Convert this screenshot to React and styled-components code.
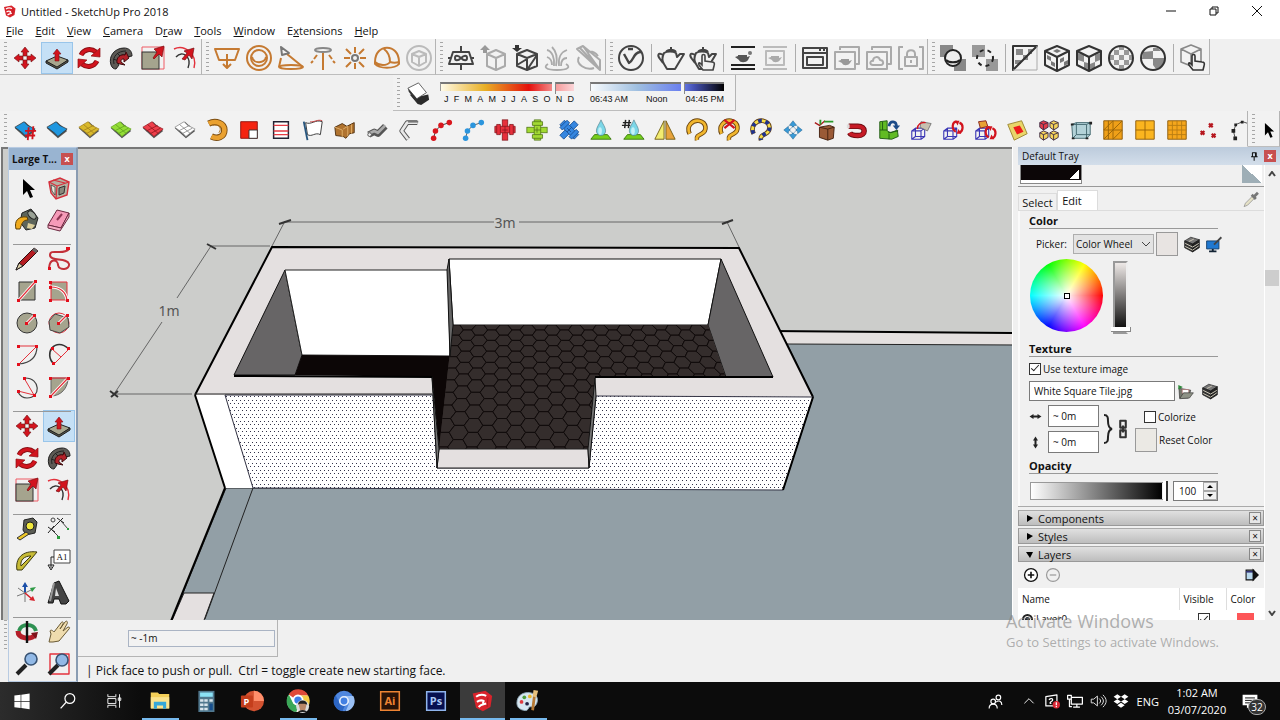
import React from 'react';
import styled, { createGlobalStyle, css } from 'styled-components';

const GlobalStyle = createGlobalStyle`
  *,
  *:before,
  *:after {
    box-sizing: border-box;
  }

  body {
    margin: 0;
    overflow: hidden;
    background: #f0f0f0;
    color: #111;
    font-family: 'Open Sans', 'Noto Sans', sans-serif;
    font-size: 11px;
  }

  button,
  input,
  select {
    margin: 0;
    padding: 0;
    color: inherit;
    font: inherit;
  }
`;

/* ---------- icons, drawn on a 26 x 26 grid ---------- */

const RED = '#d2141e';
const ORANGE = '#c57a32';
const DARK = '#444';
const PALE = '#aaa';

const line = (stroke, width = 2) => ({
  fill: 'none',
  stroke,
  strokeWidth: width,
  strokeLinejoin: 'round',
});

const teapot = 'M6 8c-2 4-2 8 0 11l3 5h8l3-5 6-10h-4l-3 3-1-4c-3-2-9-2-12 0zM5 10c-5-3-6 0-3 4l3 4M8 7c2-3 8-3 10 0M13 4V2';
const hand = 'M13 25l-4-5c-1-2 0-3 2-1l1 1v-9c0-2 3-2 3 0v5l7 1c2 0 3 1 2 4l-1 4z';
const cubePath = 'M13 1l12 5v14l-12 6-12-6V6zM1 6l12 6 12-6M13 12v14';

const moveIcon = (
  <g fill={RED} stroke="#6d1013" strokeWidth="0.6">
    {[0, 90, 180, 270].map((a) => (
      <path key={a} transform={`rotate(${a} 13 13)`} d="M13 2l4 5h-2v4h-4V7H9z" />
    ))}
  </g>
);

const pushIcon = (
  <>
    <path d="M2 16l11-5 11 4-11 8z" fill="#a8a78f" stroke="#222" />
    <path d="M2 16v2l11 6 11-7v-2l-11 7z" fill="#555548" stroke="#222" />
    <path d="M13 4l4 5h-2v7h-4V9H9z" fill={RED} stroke="#7a1014" strokeWidth="0.6" />
  </>
);

const rotateIcon = (
  <>
    <path d="M5 10c3-6 10-7 15-3M21 16c-3 6-10 7-15 3" {...line('#8d1015', 5)} />
    <path d="M5 10c3-6 10-7 15-3M21 16c-3 6-10 7-15 3" {...line(RED, 3)} />
    <path d="M15 11l9 1V3zM11 15l-9-1v9z" fill={RED} stroke="#8d1015" strokeWidth="0.7" />
  </>
);

const followIcon = (
  <>
    <path d="M3 20C0 11 7 3 16 3c5 0 8 3 8 8l-5 1c0-3-5-3-8 0-2 2-2 5 0 8l-3 4c-2 0-4-1-5-4z" fill="#5d5a55" stroke="#222" />
    <path d="M6 19C4 11 10 6 18 6M5 14l6 2M9 8l4 4" {...line('#222', 1)} />
    <path d="M9 18c-1-6 4-9 8-8l1-3 3 6-5 4v-3c-3 0-3 1-3 3l4 3-5-1z" fill="#b32229" stroke="#3c0a0c" />
  </>
);

const scaleIcon = (
  <>
    <rect x="2" y="2" width="22" height="22" {...line('#ef5a64', 1)} />
    <rect x="2" y="7" width="17" height="17" fill="#a5a48e" stroke="#333" />
    <path d="M13 13l4-6-3-3 10-3-2 11-3-3-5 5z" fill={RED} stroke="#7a1014" strokeWidth="0.7" />
  </>
);

const offsetIcon = (
  <>
    <path d="M2 4C12-1 26 9 22 23" {...line('#e3323c', 1.4)} />
    <path d="M4 12c7-8 16 1 12 11" {...line('#333', 1.4)} />
    <path d="M10 14l5-6-3-2 10-3-2 11-3-4-4 5z" fill={RED} stroke="#7a1014" strokeWidth="0.7" />
  </>
);

const slab = (fill, grid) => (
  <>
    <path d="M2 11l11-7 11 10-10 8z" fill="#555" />
    <path d="M2 10l10-6 4 4 8 4-10 8-4-4z" fill={fill} stroke={grid || '#333'} strokeWidth="0.8" />
    <path d="M7 7l12 10M6 14l12-6M10 17l11-6" fill="none" stroke={grid || 'none'} strokeWidth="0.9" />
  </>
);

const beads = (color, edge) => (
  <>
    <path d="M5 22l2-8 6-6 9-3" {...line(edge, 1)} />
    {[[5, 22], [7, 14], [13, 8], [22, 5]].map(([x, y]) => (
      <circle key={x} cx={x} cy={y} r="3" fill={color} />
    ))}
  </>
);

const cross = (fill, edge, a = 0) => (
  <g transform={`rotate(${a} 13 13)`} fill={fill} stroke={edge} strokeWidth="0.8">
    <rect x="10" y="2" width="6" height="22" />
    <path d="M2 9h22v7H2z" />
    <path d="M7 7v11M19 7v11M10 13h6M13 9v7" />
    <path d="M4 7h4v11H4zM18 7h4v11h-4z" />
  </g>
);

const drop = (
  <>
    <path d="M2 23l4-5h14l4 5z" fill="#76cf1c" stroke="#3c7a10" />
    <path d="M13 2c2 5 5 8 5 12a5 5 0 0 1-10 0c0-4 3-7 5-12z" fill="#7cd7e8" stroke="#55808a" strokeWidth="0.7" />
    <ellipse cx="12" cy="14" rx="2" ry="4" fill="#c4f1f7" />
  </>
);

const loopPath = 'M5 17C1 9 8 2 15 3c9 2 9 11 3 14-4 2-6 3-5 7';

const loop = (color) => (
  <>
    <path d={loopPath} {...line('#6b4510', 5)} />
    <path d={loopPath} {...line(color, 3)} />
  </>
);

const wireCube = (
  <path d="M3 14h10v9H3zM7 11h10v9H7zM3 14l4-3M13 14l4-3M13 23l4-3M3 23l4-3" {...line('#3b37b5', 1.2)} />
);

const smallSwirl = (x, y) => (
  <g transform={`translate(${x} ${y})`}>
    <path d="M6 1c-5 0-6 8-1 11M9 2c5 2 4 9 0 11" {...line(RED, 2.4)} />
    <path d="M4 0l5 0-2 5zM11 14l-5 0 2-5z" fill={RED} />
  </g>
);

const checks = 'M6 5h5v5H6zM11 10h5v5h-5zM16 5h5v5h-5zM1 10h5v5H1zM21 10h4v5h-4zM6 15h5v5H6zM16 15h5v5h-5zM11 20h5v4h-5zM11 2h5v3h-5z';

const woodBox = (
  <>
    <path d="M1 8l10-6 14 4-11 7z" fill="#777" stroke="#111" />
    <path d="M1 8v11l13 7V13z" fill="#333" stroke="#111" />
    <path d="M14 13v13l11-7V6z" fill="#222" stroke="#111" />
    <path d="M2 12l12 6 10-6M2 17l12 6 10-7M8 9l8-4" {...line('#c9c4b4', 1.6)} />
  </>
);

const icons = {
  move: moveIcon,
  push: pushIcon,
  rotate: rotateIcon,
  follow: followIcon,
  scale: scaleIcon,
  offset: offsetIcon,
  rectLight: <path d="M1 4h24l-4 11H5zM13 9v14M9 19l4 4 4-4" {...line(ORANGE)} />,
  sphereLight: (
    <g {...line(ORANGE)}>
      <circle cx="13" cy="13" r="12" />
      <circle cx="13" cy="13" r="8" />
      <path d="M6 12c1 7 13 7 14 0" />
    </g>
  ),
  spotLight: (
    <>
      <path d="M3 13L1 22M9 9l16 13" {...line(ORANGE)} />
      <ellipse cx="13" cy="22" rx="12" ry="2" {...line(ORANGE)} />
      <path d="M3 2l8 6-7 2z" {...line('#777')} />
    </>
  ),
  iesLight: (
    <>
      <ellipse cx="13" cy="5" rx="8" ry="2" {...line('#888')} />
      <path d="M13 8v17M7 10l-3 4M19 10l3 4M3 16l-2 2M23 16l2 2" {...line(ORANGE)} />
    </>
  ),
  omniLight: (
    <>
      <path d="M13 2v6M13 18v6M2 13h6M18 13h6M4 4l5 5M17 17l5 5M22 4l-5 5M9 17l-5 5" {...line(ORANGE)} />
      <circle cx="13" cy="13" r="3" {...line('#777')} />
    </>
  ),
  domeLight: (
    <path d="M1 17C1-2 25-2 25 17v2c-4 5-20 5-24 0zM1 17c4 4 12 4 15 0 0-7-2-10-6-13M16 17c3 1 6 1 9 0" {...line(ORANGE)} />
  ),
  meshLight: (
    <>
      <circle cx="13" cy="13" r="12" {...line('#bbb')} />
      <path d="M13 6l7 3v8l-7 4-7-4V9zM6 9l7 3 7-3M13 12v9" {...line('#bbb')} />
    </>
  ),
  infinite: (
    <g {...line(DARK)}>
      <path d="M5 7h16l4 12H1zM13 1v6M13 19v6M0 13h3M23 13h3" />
      <path d="M13 13c-3-3-6-3-6 0s3 3 6 0 6-3 6 0-3 3-6 0" />
    </g>
  ),
  exportProxy: (
    <>
      <path d="M16 5l9 4v12l-9 4-9-4V9zM7 9l9 4 9-4M16 13v12" {...line(PALE)} />
      <path d="M5 0l5 5H7v3H3V5H0z" fill="#999" />
    </>
  ),
  importProxy: (
    <>
      <path d="M15 5l10 4v12l-10 4-10-4V9zM5 9l10 4 10-4M15 13v12M15 25l10-15M5 20l10-6" {...line(DARK)} />
      <path d="M5 7l5-4H7V0H3v3H0z" fill="#333" />
    </>
  ),
  fur: (
    <g {...line(PALE, 1.8)}>
      <path d="M4 19c-5 3-2 6 9 6s14-3 9-6M10 21C11 13 8 6 3 5M12 21c2-9 0-15-4-19M15 21c-1-8 2-14 8-16M17 21c0-5 2-8 6-8M8 20c0-4-2-7-5-8" />
    </g>
  ),
  clipper: (
    <path d="M1 4l6-3 17 14v10zM7 1l17 24M4 3l18 19M3 12c-4 7 7 14 15 11M11 7c4-1 8 0 11 4" {...line(PALE)} />
  ),
  vray: (
    <>
      <circle cx="13" cy="13" r="12" {...line(DARK)} />
      <path d="M6 9l5 9c5-2 4-11 12-11M10 4h5" {...line(DARK, 2.4)} />
    </>
  ),
  teapot: <path d={teapot} {...line(DARK)} />,
  teapotHand: (
    <>
      <path d={teapot} {...line(DARK)} />
      <path d={hand} fill="#f0f0f0" stroke={DARK} strokeWidth="1.6" />
    </>
  ),
  cloudPot: (
    <>
      <path d="M1 2h24M1 24h24M1 20h24" {...line('#222')} />
      <path d="M8 10h9v2l3-1-2 4c-2 3-8 3-9 0l-4-3 3-1z" fill="#555" />
      <circle cx="20" cy="8" r="2" fill="#777" />
    </>
  ),
  framePot: (
    <>
      <path d="M1 2h24M1 24h24M4 6h18v14H4z" {...line('#bbb')} />
      <path d="M9 11h8v2l3-1-2 3c-2 3-7 3-8 0l-4-2 3-1z" fill="#aaa" />
    </>
  ),
  buffer: <path d="M1 3h24v20H1zM1 8h24M5 12h16v8H5zM17 5h2M21 5h2" {...line(DARK)} />,
  framesPot: (
    <>
      <path d="M1 7h20v17H1zM6 5V2h19v17h-3" {...line(PALE)} />
      <path d="M7 14h8v2l3-1-2 3c-2 3-7 3-8 0l-4-2 3-1z" fill="#999" />
    </>
  ),
  framesCloud: <path d="M1 7h20v17H1zM6 5V2h19v17h-3M7 20c-4 0-3-5 0-4 0-5 6-5 7-1 4 0 4 5 1 5z" {...line(PALE)} />,
  lock: <path d="M5 2H1v22h4M21 2h4v22h-4M7 12h12v9H7zM9 12V9c0-5 8-5 8 0v3M13 15v3" {...line(PALE)} />,
  squares: (
    <>
      <path d="M0 0h13v12H0zM14 14h12v12H14z" fill="#888" />
      <circle cx="13" cy="13" r="8" fill="#eee" stroke="#222" strokeWidth="2" />
      <path d="M6 15c3 3 11 3 14 0" {...line('#222')} />
    </>
  ),
  squaresDash: (
    <>
      <path d="M0 0h13v12H0zM14 14h12v12H14z" fill="#999" />
      <circle cx="13" cy="13" r="8" strokeDasharray="4 4" {...line('#222')} />
    </>
  ),
  diagonal: (
    <>
      <path d="M4 4h7v6H4zM11 10h5v5h-5zM16 4h4v5h-4zM3 15h6v4H3z" fill="#888" />
      <path d="M1 1h24L1 25z" {...line('#333')} />
      <path d="M25 1v24H1" {...line('#aaa', 1)} />
    </>
  ),
  cubeChecks: (
    <>
      <path d="M3 10l4 2v4l-4-2zM7 16l4 2v4l-4-2zM16 14l4-2v4l-4 2zM20 17l4-2v4l-4 2zM9 6l4-2 4 2-4 2z" fill="#777" />
      <path d={cubePath} {...line('#333')} />
    </>
  ),
  cubeChecksBig: (
    <>
      <path d="M2 8l6 2v7l-6-2zM19 10l5-2v7l-5 2zM14 19l5-2v6l-5 1zM8 17l4 1v6l-4-1z" fill="#888" />
      <path d={cubePath} {...line('#333')} />
    </>
  ),
  ballChecks: (
    <>
      <path d={checks} fill="#999" />
      <circle cx="13" cy="13" r="12" {...line('#333')} />
    </>
  ),
  ballChecksBig: (
    <>
      <path d="M13 13h12c-1 6-4 9-9 11l-3-4zM3 7l10-1v8H2zM13 3l5 0 3 3-8 0z" fill="#888" />
      <circle cx="13" cy="13" r="12" {...line('#333')} />
    </>
  ),
  cubeHand: (
    <>
      <path d="M11 0l10 4v13l-10 4-10-4V4zM1 4l10 5 10-5M11 9v10" {...line('#888', 1.6)} />
      <path d={hand} fill="#f0f0f0" stroke="#333" strokeWidth="1.6" />
    </>
  ),
  shadow: (
    <>
      <path d="M3 14l9 11 4 1 9-6-1-6-9 2z" fill="#2b2b2b" />
      <path d="M1 7l12-6 9 11-11 7z" fill="#fff" stroke="#555" />
      <path d="M1 7l10 12v4L2 11z" fill="#333" />
    </>
  ),
  slabHash: (
    <>
      {slab('#1f97e0')}
      <path d="M17 10l-1 14M22 9l-1 14M13 14h12M13 19h11" {...line(RED)} />
    </>
  ),
  slabBlue: slab('#1f97e0'),
  slabGold: slab('#d9b92d', '#a4831c'),
  slabGreen: slab('#94dd37', '#62a51d'),
  slabRed: slab('#ee3f4b', '#961820'),
  slabWhite: slab('#fff', '#888'),
  ring: (
    <>
      <path d="M4 6C12 2 21 6 21 13c0 8-8 10-14 7" {...line('#7c4d11', 7)} />
      <path d="M4 6C12 2 21 6 21 13c0 8-8 10-14 7" {...line('#eaa130', 5)} />
      <path d="M8 8c7-2 11 3 7 8" {...line('#a86c18', 1)} />
    </>
  ),
  redCorner: (
    <>
      <path d="M4 4h18v18H4z" fill="#f42310" stroke="#8d1510" />
      <path d="M13 13h9v9h-9z" fill="#fff" stroke="#333" />
    </>
  ),
  bars: (
    <>
      <path d="M5 4h16v18H5z" fill="#fff" stroke="#223" strokeWidth="1.6" />
      <path d="M5 8h16M5 14h16M5 18h16" {...line('#e53b44', 1.6)} />
    </>
  ),
  flag: (
    <>
      <path d="M5 5c6 3 11-4 18-1l-2 14c-6-3-9 3-14 0z" fill="#fff" stroke="#333" />
      <path d="M3 4l4 20" {...line('#26557e')} />
      <path d="M10 4c4 1 8-3 13-1" {...line('#c33a3a', 1)} />
    </>
  ),
  woodJoint: (
    <>
      <path d="M2 10l8-4 5 3 8-4v11l-5 1-4 5-3-2-8-1z" fill="#b0732f" stroke="#4e3010" />
      <path d="M11 12l5-3v11M2 10l8 3v8M20 7v10" {...line('#e1b06a', 1)} />
    </>
  ),
  pipe: (
    <>
      <path d="M4 18l6-3 4 2 8-8" {...line('#555', 7)} />
      <path d="M4 17l6-3 4 2 8-8" {...line('#aaa', 3)} />
      <circle cx="5" cy="18" r="2" fill="#eee" stroke="#555" />
    </>
  ),
  bend: (
    <>
      <path d="M22 5H11L5 14l7 9" {...line('#555', 5)} />
      <path d="M22 5H11L5 14l7 9" {...line('#e8e8e8', 3)} />
      <path d="M23 4H12" {...line('#777')} />
    </>
  ),
  beadsRed: beads('#d9161d', '#333'),
  beadsBlue: beads('#2b95dd', '#555'),
  crossRed: cross('#e6303b', '#83151b'),
  crossGreen: cross('#a2da32', '#4c7013', 90),
  crossBlue: cross('#3586e0', '#164a8c', 45),
  drop,
  dropHash: (
    <>
      <g transform="translate(1 0)">{drop}</g>
      <path d="M5 2L4 11M9 2L8 11M2 5h9M1 8h9" {...line('#222', 1.6)} />
    </>
  ),
  mirror: (
    <>
      <path d="M12 3v20H2z" fill="#f2ec70" stroke="#715d13" />
      <path d="M14 3v20h10z" fill="#e8a33c" stroke="#715d13" />
    </>
  ),
  loop: loop('#f1b62d'),
  loopCut: (
    <>
      {loop('#f1b62d')}
      <path d="M8 2l11 9M19 2L8 11" {...line(RED, 2.4)} />
    </>
  ),
  loopDots: (
    <>
      {loop('#f5dd49')}
      <path d={loopPath} strokeDasharray="4 4" {...line('#1f328f', 4)} />
    </>
  ),
  moveBlue: (
    <g fill="#399ad7" stroke="#1c5985" strokeWidth="0.5">
      {[0, 90, 180, 270].map((a) => (
        <path key={a} transform={`rotate(${a} 13 13)`} d="M13 3l4 5h-2l-2 2-2-2H9z" />
      ))}
      <path d="M13 9l4 4-4 4-4-4z" fill="none" />
    </g>
  ),
  woodCube: (
    <>
      <path d="M7 10l11-2 5 2-1 12-6 2-9-3z" fill="#9a5a36" stroke="#43210f" />
      <path d="M7 10l9 2v12M16 12l7-2" {...line('#43210f', 1)} />
      <path d="M2 5l5 3 6-5" {...line('#a81b1b', 1.4)} />
      <path d="M8 7V2M12 4h10" {...line('#2b9a2c')} />
    </>
  ),
  magnet: (
    <>
      <path d="M4 9h10c9 0 9 10 0 10-4 0-8-1-9-3" {...line('#6e0d12', 6)} />
      <path d="M4 9h10c9 0 9 10 0 10-4 0-8-1-9-3" {...line('#c61b26', 4)} />
      <path d="M2 9h3" {...line('#ddd', 4)} />
    </>
  ),
  greenCubes: (
    <>
      <path d="M3 4l8-1v11l4 2 7-3 1 7-7 3-13-1z" fill="#61bb23" stroke="#1e5a12" />
      <path d="M3 13h8M12 16l11-2M6 4v9M13 17v6" {...line('#1e5a12', 1)} />
      <path d="M13 9c1-7 8-6 8 0" {...line('#1c4b88', 3)} />
      <path d="M17 8h8l-4 5z" fill="#1c4b88" />
    </>
  ),
  wireBend: (
    <>
      {wireCube}
      <path d="M13 4l11 2-4 8-8-4z" fill="#c7c0b0" stroke="#777" />
      <path d="M9 12c0-5 4-8 9-7" {...line(RED, 1.6)} />
    </>
  ),
  wireSwirl: (
    <>
      {wireCube}
      {smallSwirl(11, 3)}
    </>
  ),
  wireSwirlTwo: (
    <>
      {wireCube}
      <path d="M6 4l8-1 2 6-8 2z" fill="#e8a133" stroke="#86211b" />
      {smallSwirl(12, 9)}
    </>
  ),
  swatch: (
    <>
      <path d="M3 7l15-4 6 14-14 7z" fill="#e9d66a" stroke="#9a8631" />
      <path d="M9 10l7-2 4 7-7 3z" fill="#ee1c1c" />
    </>
  ),
  fourCubes: (
    <>
      {[[3, 3, '#e13b4a'], [14, 3, '#f3d25a'], [3, 14, '#f3d25a'], [14, 14, '#f3d25a']].map(([x, y, c]) => (
        <g key={`${x}-${y}`} transform={`translate(${x} ${y})`}>
          <path d="M0 2l4-2 5 2v5L4 10 0 7z" fill={c} stroke="#3f2d48" />
          <path d="M0 2l4 2 5-2M4 4v6" {...line('#3f2d48', 1)} />
        </g>
      ))}
    </>
  ),
  glassCube: (
    <>
      <path d="M3 7l5-2h15v13l-4 4H4z" fill="#b3d2d8" stroke="#41666e" />
      <path d="M3 7h16v15M19 7l4-2M8 5v13h15M8 18l-4 4" {...line('#41666e', 1)} />
      <path d="M2 6h3v2H2zM22 4h3v3h-3zM18 21h3v2h-3zM3 21h3v2H3z" fill="#222" />
    </>
  ),
  gridDiag: (
    <>
      <path d="M3 3h20v20H3z" fill="#f0a018" stroke="#8b5a0a" />
      <path d="M3 13h20M13 3v20M3 23L23 3M3 13L13 3M13 23l10-10M8 3v20" {...line('#9a6509', 1)} />
    </>
  ),
  gridFour: (
    <>
      <path d="M3 3h20v20H3z" fill="#fbb51f" stroke="#8b5a0a" />
      <path d="M3 13h20M13 3v20" {...line('#9a6509', 1)} />
    </>
  ),
  gridNine: (
    <>
      <path d="M3 3h20v20H3z" fill="#f5a61c" stroke="#8b5a0a" />
      <path d="M3 8h20M3 13h20M3 18h20M8 3v20M13 3v20M18 3v20" {...line('#b97d12', 1)} />
    </>
  ),
  redMarks: <path d="M13 6l4 4M17 6l-4 4M4 14l4 4M8 14l-4 4M16 17l4 4M20 17l-4 4" {...line('#b6171f', 2.4)} />,
  pointsArc: (
    <>
      <path d="M10 22L8 14l3-7 7-3 6 2" {...line('#444', 1)} />
      <path d="M8 20h4v4H8zM6 12h4v4H6zM9 6h3v3H9zM16 3h3v3h-3z" fill="#222" />
    </>
  ),
  cursor: <path d="M9 4v16l4-4 3 7 3-1-3-7h5z" fill="#000" />,
  component: (
    <>
      <path d="M3 7l11-4 9 4-2 13-11 4-5-6z" fill="#b5b2a3" stroke="#d5303c" strokeWidth="1.4" />
      <path d="M3 7l8 4-1 13M11 11l12-4M7 5l12 3" {...line('#d5303c', 1.2)} />
      <path d="M13 13l6-2-1 7-5 2z" fill="#8a887c" stroke="#333" />
      <path d="M5 10l4 2v8l-3-4z" fill="#e9e6da" stroke="#333" strokeWidth="0.7" />
    </>
  ),
  bucket: (
    <>
      <path d="M8 6l9-4 7 9-3 10-9 2-6-8z" fill="#5d655b" stroke="#222" />
      <ellipse cx="18" cy="8" rx="5" ry="3" transform="rotate(45 18 8)" fill="#9aa296" stroke="#222" />
      <path d="M2 22C0 14 4 9 13 10l1 3c-6 0-6 4-8 9z" fill="#f0ab1d" stroke="#5d4008" />
      <path d="M14 16l7 2-3 4-5-1z" fill="#dccf9b" />
    </>
  ),
  eraser: (
    <>
      <path d="M2 18L11 3l12 3-8 15z" fill="#f59ab8" stroke="#6c2a41" />
      <path d="M2 18l13 3 8-15v4l-9 14-12-3z" fill="#f7b0c8" stroke="#6c2a41" />
      <path d="M11 13l5-6" {...line('#8e3553')} />
    </>
  ),
  pencil: (
    <>
      <path d="M2 24l3-7L20 2l4 3L9 20z" fill="#b51c22" stroke="#2e0c0d" />
      <path d="M2 24l3-7 4 3z" fill="#dccfa7" stroke="#222" />
      <path d="M19 3l4 3" {...line('#666', 3)} />
    </>
  ),
  freehand: (
    <>
      <path d="M3 22C4 11 12 14 12 19c1 6 12 5 11-1C21 11 4 16 4 9S17 10 23 3" {...line('#c3313a', 2)} />
      <path d="M2 21h3v3H2zM20 1h4v3h-4z" fill="#e30f1c" />
    </>
  ),
  rectangle: (
    <>
      <path d="M5 4h16v18H5z" fill="#a5a48e" stroke="#333" />
      <path d="M5 22L21 4" {...line('#fff', 3)} />
      <path d="M5 22L21 4" {...line('#e3323c', 1.2)} />
      <path d="M3 21h3v3H3zM20 2h3v3h-3z" fill="#e30f1c" />
    </>
  ),
  rotRect: (
    <>
      <path d="M5 4h16v18H5z" fill="#a5a48e" stroke="#e3323c" />
      <path d="M5 9c9 0 15 5 16 13" {...line('#fff', 3)} />
      <path d="M5 9c9 0 15 5 16 13" {...line('#e3323c', 1.2)} />
      <path d="M3 3h3v3H3zM3 8h3v3H3zM3 21h3v3H3zM20 21h3v3h-3z" fill="#e30f1c" />
    </>
  ),
  circle: (
    <>
      <circle cx="13" cy="13" r="10" fill="#a5a48e" stroke="#333" />
      <path d="M13 13l7-7" {...line('#fff', 3)} />
      <path d="M13 13l7-7" {...line('#e3323c', 1.2)} />
      <path d="M11 12h3v3h-3zM19 4h3v3h-3z" fill="#e30f1c" />
    </>
  ),
  polygon: (
    <>
      <circle cx="13" cy="13" r="10" {...line('#e3323c', 1)} />
      <path d="M9 4l13 4 1 9-9 6-10-3-1-9z" fill="#a5a48e" stroke="#444" />
      <path d="M13 13l7-7" {...line('#fff', 3)} />
      <path d="M13 13l7-7" {...line('#e3323c', 1.2)} />
      <path d="M11 12h3v3h-3zM20 4h3v3h-3z" fill="#e30f1c" />
    </>
  ),
  arc: (
    <>
      <path d="M23 4c0 11-7 17-18 18" {...line('#444', 1.2)} />
      <path d="M4 4h19L5 22" {...line('#e3323c', 1)} />
      <path d="M3 3h3v3H3zM21 3h3v3h-3zM3 21h3v3H3z" fill="#e30f1c" />
    </>
  ),
  twoArc: (
    <>
      <path d="M8 22C-3 12 9-6 23 7" {...line('#333', 1.6)} />
      <path d="M8 22L23 7M6 7l9 8" {...line('#e3323c', 1)} />
      <path d="M6 20h3v3H6zM21 5h3v3h-3zM5 5h3v3H5z" fill="#e30f1c" />
    </>
  ),
  threeArc: (
    <>
      <path d="M11 4c16 0 16 20 2 20-4 0-7-2-9-6" {...line('#444', 1.2)} />
      <path d="M10 4l10 17-16-4" {...line('#e3323c', 1)} />
      <path d="M9 3h3v3H9zM3 16h3v3H3zM19 20h3v3h-3z" fill="#e30f1c" />
    </>
  ),
  pie: (
    <>
      <path d="M5 4h17c0 10-7 18-17 18z" fill="#a5a48e" stroke="#666" />
      <path d="M5 22L22 4" {...line('#fff', 3)} />
      <path d="M5 4h17L5 22" {...line('#e3323c', 1.2)} />
      <path d="M3 3h3v3H3zM21 3h3v3h-3zM3 21h3v3H3z" fill="#e30f1c" />
    </>
  ),
  tape: (
    <>
      <path d="M10 4l9-2 4 4-2 11-9 2-3-5z" fill="#5b5d55" stroke="#222" />
      <circle cx="16" cy="10" r="4" fill="#f2e93c" stroke="#222" />
      <path d="M3 22l9-6 3 2-9 6z" fill="#f0c929" stroke="#333" />
    </>
  ),
  dimension: (
    <>
      <path d="M5 14L14 5M6 14l6 6M15 5l7 8" {...line('#444', 1)} />
      <path d="M2 11l7 5M8 10l-6 7M11 2l7 5M17 2l-6 6" {...line('#222', 1)} />
      <path d="M11 20h3v3h-3zM21 12h2v2h-2z" fill="#2b9d3d" />
      <circle cx="7" cy="4" r="2" {...line('#444', 1)} />
    </>
  ),
  protractor: (
    <>
      <path d="M3 22C1 11 8 2 23 4L8 22z" fill="#c7bb36" stroke="#3d3a10" />
      <path d="M7 18c-1-6 3-10 10-10z" fill="#f0f0f0" stroke="#3d3a10" />
    </>
  ),
  textTag: (
    <>
      <path d="M8 2h16v13H8z" fill="#fff" stroke="#444" />
      <path d="M8 9H5v11M2 17l3 5 3-5z" {...line('#222', 1)} />
      <text x="16" y="12" fontSize="9" fontFamily="Liberation Serif, serif" textAnchor="middle" fill="#111">A1</text>
    </>
  ),
  axes: (
    <>
      <path d="M11 13V5" {...line('#1b4fa8', 2)} />
      <path d="M11 2l3 5H8z" fill="#1b4fa8" />
      <path d="M11 13l8-4M11 13l-8 3M11 13v9M11 13L4 8" {...line('#777', 1)} />
      <path d="M16 8l6-1-4 5z" fill="#2e9a45" />
      <path d="M11 13l7 6" {...line('#d6222b', 1.6)} />
      <path d="M21 21l-6-1 4-4z" fill="#d6222b" />
    </>
  ),
  threeText: (
    <>
      <path d="M8 3l5-2 10 20-3 3h-5l-2-5H8l-1 4H2z" fill="#444" stroke="#111" />
      <path d="M10 8l3 8H9z" fill="#ddd" />
      <path d="M8 3l-4 18" {...line('#999', 2)} />
    </>
  ),
  orbit: (
    <>
      <path d="M5 12c2-8 15-8 17 0" {...line('#2e9152', 4)} />
      <path d="M4 12c0 8 13 9 17 4" {...line('#b41f2a', 5)} />
      <path d="M17 14l7-1-2 7z" fill="#7c141b" />
      <path d="M13 2v22" {...line('#111', 2.4)} />
    </>
  ),
  pan: (
    <path
      d="M3 23l2-8-1-3c1-2 3 0 4 1l7-9c1-2 3-1 2 1l-3 5 5-7c2-2 3 0 2 2l-4 7 5-4c2 0 2 1 1 2l-5 6-5 6-6 1z"
      fill="#efdcae"
      stroke="#6a5a34"
    />
  ),
  zoom: (
    <>
      <path d="M3 23l9-9" {...line('#222', 4)} />
      <circle cx="17" cy="8" r="6" fill="#92b9e6" stroke="#385374" strokeWidth="1.6" />
    </>
  ),
  zoomAll: (
    <>
      <path d="M4 3h19v20H4z" {...line('#e3323c', 1.4)} />
      <path d="M3 23l9-9" {...line('#222', 4)} />
      <circle cx="16" cy="9" r="6" fill="#92b9e6" stroke="#385374" strokeWidth="1.6" />
    </>
  ),
  woodBox,
  monitor: (
    <>
      <path d="M1 8h20v13H1z" fill="#1f78d0" stroke="#103a66" strokeWidth="1.4" />
      <path d="M11 21v3M5 25h12" {...line('#123', 3)} />
      <path d="M13 14L25 2" {...line('#444', 3)} />
    </>
  ),
  folder: (
    <>
      <path d="M3 8l18 3-4 12H4z" fill="#74786d" stroke="#333" />
      <path d="M8 10h10v6H8z" fill="#fff" stroke="#a66" />
      <path d="M4 24l6-9h15l-6 8z" fill="#8e9286" stroke="#333" />
      <path d="M2 10V3l7 3z" fill="#2e8a3a" />
    </>
  ),
  dropper: (
    <>
      <path d="M3 24l2-5L15 9l3 3L8 22z" fill="#e5e1c6" stroke="#888" />
      <path d="M14 7l6 6M18 9l5-5" {...line('#777', 4)} />
    </>
  ),
  details: (
    <>
      <path d="M2 4h14v18H2z" fill="#b9d9ee" stroke="#111" strokeWidth="2" />
      <path d="M2 7h13" {...line('#337', 3)} />
      <path d="M14 1l12 12-12 12z" fill="#111" />
    </>
  ),
  chain: <path d="M9 1h8v10H9zM9 15h8v10H9zM13 8v10" {...line('#333', 3)} />,
  arrowsH: <path d="M1 13l8-5v3h8V8l8 5-8 5v-3H9v3z" fill="#222" />,
  arrowsV: <path d="M13 1l5 8h-3v8h3l-5 8-5-8h3V9H8z" fill="#222" />,
  plus: (
    <>
      <circle cx="13" cy="13" r="12" fill="#fff" stroke="#111" strokeWidth="2.4" />
      <path d="M13 7v12M7 13h12" {...line('#111', 3)} />
    </>
  ),
  minus: (
    <>
      <circle cx="13" cy="13" r="12" {...line('#999', 2.2)} />
      <path d="M7 13h12" {...line('#999', 2.2)} />
    </>
  ),
  app: (
    <>
      <path d="M2 4l15-3 8 6-2 13-9 5-8-4z" fill="#d9232b" />
      <path d="M6 8c4-3 8-3 12-1M7 14c3-2 6-2 8-1l-1 3M9 20c3-3 6-3 9-4" {...line('#fff', 2.4)} />
      <path d="M20 9l-1 11" {...line('#a8141b', 1)} />
    </>
  ),
  windows: <path d="M2 5l9-1v9H2zM12 4l12-2v11H12zM2 14h9v9l-9-1zM12 14h12v11l-12-2z" fill="#fff" />,
  search: (
    <>
      <circle cx="16" cy="9" r="8" {...line('#fff', 2)} />
      <path d="M10 15L1 25" {...line('#fff', 2)} />
    </>
  ),
  taskView: <path d="M3 2v4h13V2M3 24v-4h13v4M3 9h13v8H3zM22 2v22M20 8h4v4h-4z" {...line('#eee', 1.6)} />,
  explorer: (
    <>
      <path d="M1 2h9l2 2h13v18H1z" fill="#f4cf58" />
      <path d="M1 8h24v15H1z" fill="#fbe38e" />
      <path d="M5 23v-9h16v9h-4v-4H9v4z" fill="#35a7d8" />
    </>
  ),
  calculator: (
    <>
      <rect x="4" y="1" width="19" height="25" fill="#51788e" />
      <path d="M6 3h15v5H6z" fill="#8be2f6" />
      <path d="M6 11h4v3H6zM11 11h4v3h-4zM17 11h4v3h-4zM6 16h4v3H6zM11 16h4v3h-4zM6 21h4v3H6zM11 21h4v3h-4z" fill="#d9e5ec" />
      <path d="M17 16h4v8h-4z" fill="#174e8c" />
    </>
  ),
  powerpoint: (
    <>
      <circle cx="15" cy="13" r="11" fill="#d35230" />
      <path d="M15 2a11 11 0 0 1 11 11H15z" fill="#ff8f6b" />
      <rect x="1" y="7" width="13" height="13" rx="1" fill="#c43e1c" />
      <text x="7" y="17" fontSize="10" fontWeight="bold" textAnchor="middle" fill="#fff">P</text>
    </>
  ),
  chrome: (
    <>
      <circle cx="13" cy="13" r="12" fill="#fff" />
      <path d="M13 13L3 6a12 12 0 0 1 21 1H13z" fill="#df4a39" />
      <path d="M13 7h11a12 12 0 0 1-11 18l5-9z" fill="#f7cc45" />
      <path d="M3 6l5 10 6 3-3 6A12 12 0 0 1 3 6z" fill="#3aa757" />
      <circle cx="13" cy="12" r="5" fill="#3d7ee8" stroke="#fff" strokeWidth="2" />
      <circle cx="18" cy="19" r="7" fill="#ddd" />
      <path d="M14 18c0-6 8-6 8 0l-1 4c-1 3-5 3-6 0z" fill="#b98768" />
      <path d="M13 17c0-6 10-6 10 0l-3-1-5 0zM13 25c2-3 8-3 10 0z" fill="#222" />
    </>
  ),
  chromium: (
    <>
      <circle cx="13" cy="13" r="12" fill="#4f87df" />
      <path d="M13 7h11a12 12 0 0 1-9 18l4-9z" fill="#9ac0f5" />
      <path d="M3 6l5 10 6 3-3 6A12 12 0 0 1 3 6z" fill="#2c66c4" />
      <circle cx="13" cy="13" r="5" fill="#4380e2" stroke="#e6effd" strokeWidth="2" />
    </>
  ),
  illustrator: (
    <>
      <path d="M2 2h22v22H2z" fill="#281207" stroke="#ee8433" strokeWidth="1.8" />
      <text x="13" y="18" fontSize="13" fontWeight="bold" textAnchor="middle" fill="#ee8433">Ai</text>
    </>
  ),
  photoshop: (
    <>
      <path d="M2 2h22v22H2z" fill="#061050" stroke="#8fb4ec" strokeWidth="1.8" />
      <text x="13" y="18" fontSize="13" fontWeight="bold" textAnchor="middle" fill="#a9c8f4">Ps</text>
    </>
  ),
  paint: (
    <>
      <path d="M1 15C1 7 8 3 15 4c9 1 10 9 6 14-2 3-6 0-7 2-1 3-3 4-6 3-5-1-7-4-7-8z" fill="#d7e7f1" stroke="#8fa9ba" />
      <circle cx="6" cy="14" r="2" fill="#df3b3f" />
      <circle cx="9" cy="9" r="2" fill="#4e9f3c" />
      <circle cx="15" cy="8" r="2" fill="#edb82d" />
      <circle cx="12" cy="16" r="2" fill="#224" />
      <path d="M18 23l2-16" {...line('#b77a35', 3)} />
      <path d="M18 8l1-7 5 1-2 7z" fill="#e6c07d" />
    </>
  ),
  people: (
    <g {...line('#fff', 2)}>
      <circle cx="9" cy="13" r="4" />
      <circle cx="18" cy="6" r="4" />
      <path d="M2 25c0-10 14-10 14 0M14 14c5-4 10-1 10 5" />
    </g>
  ),
  chevronUp: <path d="M3 18l10-10 10 10" {...line('#fff', 2)} />,
  wacom: (
    <>
      <path d="M3 6l18-3v18H3zM8 11c4-4 8-1 5 2-3 2-5 4-1 4" {...line('#fff', 2)} />
      <circle cx="20" cy="19" r="6" fill="#da2835" />
      <path d="M20 15v5M20 21v2" {...line('#fff', 2)} />
    </>
  ),
  network: <path d="M7 7h18v11H7zM16 18v5M10 23h11M1 4h6v6H1zM4 10v12h4" {...line('#fff', 2)} />,
  speaker: <path d="M2 10h4l6-5v16l-6-5H2zM15 9c3 3 3 5 0 8M18 6c5 5 5 9 0 14M21 3c7 7 7 13 0 20" {...line('#ddd', 1.6)} />,
  dropbox: <path d="M7 2l6 4-6 4-6-4zM19 2l6 4-6 4-6-4zM7 10l6 4-6 4-6-4zM19 10l6 4-6 4-6-4zM13 16l6 4-6 4-6-4z" fill="#fff" />,
  note: (
    <>
      <path d="M1 3h24v17H13l-5 5v-5H1z" fill="#fff" />
      <path d="M5 8h16M5 12h16M5 16h10" {...line('#111', 1.6)} />
    </>
  ),
  pin: <path d="M7 2h11v12H7zM16 2v12M3 14h19M12 14v11" {...line('#111', 3)} />,
};

const Svg = styled.svg`
  display: block;
  flex: none;
  width: ${(p) => p.$size}px;
  height: ${(p) => p.$size}px;
  overflow: visible;
`;

const Icon = ({ name, size = 26 }) => (
  <Svg viewBox="0 0 26 26" $size={size} aria-hidden="true">
    {icons[name]}
  </Svg>
);

/* ---------- window frame ---------- */

const Window = styled.div`
  position: relative;
  display: flex;
  flex-direction: column;
  height: 100vh;
`;

const TitleBar = styled.header`
  display: flex;
  align-items: center;
  height: 22px;
  padding: 0 2px 0 3px;
  background: #fff;
`;

const Title = styled.h1`
  flex: 1;
  margin: 0 0 0 5px;
  font-size: 11px;
  font-weight: 400;
`;

const WindowButton = styled.button`
  display: grid;
  place-items: center;
  width: 43px;
  height: 20px;
  border: 0;
  background: none;
`;

const MenuBar = styled.nav`
  display: flex;
  gap: 12px;
  height: 17px;
  padding-left: 6px;
  background: #fff;
  line-height: 17px;
`;

const MenuLink = styled.a`
  color: #111;
  text-decoration: none;
`;

const Hot = styled.span`
  text-decoration: underline;
`;

/* ---------- docked toolbars ---------- */

const ToolRow = styled.div`
  display: flex;
  flex: none;
  height: 36px;
`;

const ToolGroup = styled.div`
  display: flex;
  align-items: center;
  flex: ${(p) => (p.$grow ? '1' : 'none')};
  min-width: 0;
  padding-top: 2px;
  overflow: hidden;
  border-right: 1px solid #b4b4b4;
  border-bottom: 1px solid ${(p) => (p.$grow ? '#f0f0f0' : '#bdbdbd')};
  background: #f2f2f2;
`;

const Grip = styled.span`
  flex: none;
  width: 3px;
  height: 32px;
  margin: 0 2px 0 4px;
  background: repeating-linear-gradient(#a6a6a6 0 1px, transparent 1px 4px);
`;

const ToolButton = styled.button`
  display: grid;
  place-items: center;
  flex: ${(p) => (p.$grow ? '1 1 0' : 'none')};
  width: 32px;
  min-width: 0;
  height: 32px;
  border: 1px solid transparent;
  background: none;

  ${(p) =>
    p.$active &&
    css`
      border-color: #99c5ea;
      background: #c5e0f6;
    `}
`;

const LastTool = styled(ToolButton)`
  flex: none;
  width: 22px;
`;

const Rule = styled.span`
  flex: none;
  width: 1px;
  height: 28px;
  margin: 0 3px 0 4px;
  background: #adadad;
`;

const ShadowRow = styled(ToolRow)`
  padding-left: 393px;
`;

const ShadowGroup = styled(ToolGroup)`
  padding-right: 11px;
`;

const ShadowScales = styled.div`
  display: flex;
  gap: 16px;
  margin-left: 6px;
`;

const Scale = styled.div`
  display: flex;
  flex-direction: column;
  gap: 3px;
  width: 134px;
  font-family: 'Liberation Sans', sans-serif;
  font-size: 9px;
  line-height: 11px;
`;

const ScaleMarks = styled.div`
  display: flex;
  justify-content: space-between;
  padding-left: ${(p) => p.$inset}px;
  white-space: nowrap;
`;

const ScaleInput = styled.input`
  width: 134px;
  height: 9px;
  appearance: none;
  border-top: 2px solid #777;
  border-left: 1px solid #999;
  background: ${(p) => p.$track};

  &::-webkit-slider-thumb {
    appearance: none;
    width: 4px;
    height: 12px;
    border-right: 1px solid #888;
    background: #f4f4f4;
  }
`;

/* ---------- working area ---------- */

const Workspace = styled.div`
  display: flex;
  flex: 1;
  min-height: 0;
`;

const LeftEdge = styled.div`
  display: flex;
  flex-direction: column;
  width: 8px;
`;

const EdgeView = styled.div`
  flex: 1;
  margin-left: 1px;
  border-top: 2px solid #777;
  border-left: 2px solid #777;
  background: #cccdcb;
`;

const EdgeBar = styled.div`
  height: 62px;
`;

const Palette = styled.aside`
  width: 70px;
  border: 1px solid #b8cbe2;
  border-right: 2px solid #8a9cb2;
  background: #f0f0f0;
`;

const PaletteTitle = styled.h2`
  display: flex;
  align-items: center;
  justify-content: space-between;
  height: 22px;
  margin: 0 0 2px;
  padding: 0 3px;
  background: #99b4d1;
  font-size: 10px;
  font-weight: 700;
`;

const CloseButton = styled.button`
  width: 12px;
  height: 12px;
  border: 0;
  background: #c75050;
  color: #fff;
  font-size: 9px;
  font-weight: 700;
  line-height: 10px;
`;

const PaletteGrid = styled.div`
  display: grid;
  grid-template-columns: 32px 32px;
  margin-left: 2px;

  & + & {
    position: relative;
    margin-top: 7px;
  }

  & + &::before {
    content: '';
    position: absolute;
    top: 1px;
    left: 2px;
    right: 5px;
    border-top: 1px solid #999;
  }
`;

const Center = styled.div`
  display: flex;
  flex: 1;
  flex-direction: column;
  min-width: 0;
`;

const Stage = styled.div`
  display: flex;
  flex: 1;
  min-height: 0;
`;

const Viewport = styled.main`
  flex: 1;
  min-width: 0;
  overflow: hidden;
  border-top: 2px solid #777;
  background: #cccdcb;
`;

const Scene = styled.svg`
  display: block;
  width: 100%;
  height: 100%;
`;

const MeasureRow = styled.div`
  height: 37px;
`;

const MeasureBox = styled.label`
  display: flex;
  align-items: center;
  justify-content: flex-end;
  width: 200px;
  height: 37px;
  padding-right: 2px;
  border-right: 1px solid #b4b4b4;
  border-bottom: 1px solid #b4b4b4;
`;

const MeasureInput = styled.input`
  width: 147px;
  height: 17px;
  padding-left: 2px;
  border: 1px solid #aab4c4;
  background: #f2f2f2;
  font-size: 10px;
`;

const Status = styled.p`
  height: 25px;
  margin: 0;
  padding-left: 8px;
  font-size: 12px;
  line-height: 27px;
  white-space: pre;
`;

/* ---------- default tray ---------- */

const Tray = styled.aside`
  display: flex;
  flex-direction: column;
  flex: none;
  width: 268px;
  padding-left: 5px;
  border-left: 1px solid #fff;
`;

const TrayTitle = styled.h2`
  display: flex;
  flex: none;
  align-items: center;
  gap: 5px;
  height: 18px;
  margin: 0;
  padding: 0 4px;
  background: linear-gradient(#bccbdc, #d3deea);
  font-size: 10px;
  font-weight: 400;
`;

const Spacer = styled.span`
  flex: 1;
`;

const TrayScroll = styled.div`
  display: flex;
  flex: 1;
  min-height: 0;
`;

const TrayBody = styled.div`
  flex: 1;
  overflow: hidden;
`;

const ScrollTrack = styled.div`
  display: flex;
  flex-direction: column;
  align-items: center;
  justify-content: space-between;
  width: 16px;
  padding: 6px 2px 4px 0;
  border-left: 1px solid #fff;
`;

const ScrollThumb = styled.span`
  width: 14px;
  height: 16px;
  margin-bottom: 232px;
  background: #cdcdcd;
`;

const PreviewRow = styled.div`
  display: flex;
  justify-content: space-between;
  height: 22px;
  padding: 0 2px;
  border-bottom: 1px solid #999;
`;

const Preview = styled.span`
  width: 62px;
  height: 19px;
  border: 1px solid #888;
  border-top: 0;
  background: linear-gradient(to top left, #fff 7px, transparent 7px) 48px 4px / 10px 10px no-repeat,
    linear-gradient(#0c0607 15px, #fff 15px);
`;

const Corner = styled.span`
  width: 20px;
  height: 18px;
  background: linear-gradient(to top right, #9eaeb6 50%, #fff 50%);
`;

const TabRow = styled.div`
  display: flex;
  align-items: flex-end;
  height: 24px;
  padding-right: 4px;
  border-bottom: 1px solid #dcdcdc;
`;

const TabIcon = styled.button`
  align-self: center;
  border: 0;
  background: none;
`;

const Tab = styled.button`
  width: ${(p) => (p.$active ? 41 : 39)}px;
  height: ${(p) => (p.$active ? 20 : 17)}px;
  padding-right: ${(p) => (p.$active ? 11 : 0)}px;
  border: 1px solid #dcdcdc;
  border-bottom: 0;
  background: ${(p) => (p.$active ? '#fff' : '#f0f0f0')};
  font-size: 11px;
  line-height: 15px;
`;

const Pane = styled.section`
  height: 295px;
  padding: 3px 46px 0 9px;
  border-left: 2px solid #fafafa;
`;

const Heading = styled.h3`
  height: 15px;
  margin: 0;
  border-bottom: 1px solid #999;
  font-size: 11px;
  font-weight: 700;
  line-height: 14px;
`;

const Row = styled.div`
  display: flex;
  align-items: center;
  gap: ${(p) => p.$gap || 0}px;
  height: ${(p) => p.$height}px;
  white-space: nowrap;
`;

const PickerRow = styled(Row)`
  width: 193px;
  padding-left: 7px;
  font-size: 10px;
`;

const SelectWrap = styled.span`
  display: flex;
  position: relative;

  svg {
    position: absolute;
    top: 8px;
    right: 4px;
    pointer-events: none;
  }
`;

const Select = styled.select`
  width: 81px;
  height: 20px;
  padding-left: 2px;
  appearance: none;
  border: 1px solid #adadad;
  border-radius: 0;
  background: #e3e3e3;
`;

const Swatch = styled.span`
  flex: none;
  width: 22px;
  height: 24px;
  border: 1px solid #999;
  background: ${(p) => p.$color};
`;

const WheelRow = styled.div`
  display: flex;
  gap: 10px;
  height: 83px;
  padding-left: 1px;
`;

const Wheel = styled.div`
  display: grid;
  place-items: center;
  width: 73px;
  height: 73px;
  border-radius: 50%;
  background: radial-gradient(closest-side, #fff, rgba(255, 255, 255, 0)),
    conic-gradient(from 90deg, red, magenta 60deg, blue 120deg, cyan 180deg, lime 240deg, yellow 300deg, red);
`;

const WheelMark = styled.span`
  width: 6px;
  height: 6px;
  border: 1px solid #000;
  background: #fff;
`;

const ValueSlider = styled.input`
  width: 15px;
  height: 73px;
  margin-top: 2px;
  appearance: none;
  writing-mode: vertical-lr;
  direction: rtl;
  border: 2px solid #999;
  border-right-color: #eee;
  background: linear-gradient(#eee9e7, #000);

  &::-webkit-slider-thumb {
    appearance: none;
    width: 20px;
    height: 5px;
    border: 1px solid #888;
    border-top: 0;
    border-left: 0;
    background: #fff;
  }
`;

const CheckLabel = styled.label`
  display: flex;
  align-items: center;
  gap: 2px;
  font-size: 10px;
  white-space: nowrap;
`;

const Check = styled.input`
  flex: none;
  display: grid;
  place-items: center;
  width: 12px;
  height: 12px;
  appearance: none;
  border: 1px solid #333;
  background: #fff;

  &:checked::before {
    content: '';
    width: 8px;
    height: 4px;
    margin-top: -3px;
    border: solid #222;
    border-width: 0 0 1px 1px;
    transform: rotate(-48deg);
  }
`;

const TextBox = styled.input`
  width: ${(p) => p.$width}px;
  height: ${(p) => p.$height || 20}px;
  padding: 0 4px;
  border: 1px solid #7a7a7a;
  background: #fff;
  font-size: 10px;
`;

const SizeGrid = styled.div`
  display: flex;
  align-items: center;
  height: 54px;
  margin-bottom: 3px;
  font-size: 10px;
`;

const SizeStack = styled.div`
  display: flex;
  flex-direction: column;
  gap: 4px;
`;

const SizeField = styled.label`
  display: flex;
  align-items: center;
  gap: 6px;
`;

const Brace = styled.svg`
  width: 12px;
  height: 32px;
  margin-left: 3px;
`;

const ColorStack = styled.div`
  display: flex;
  flex-direction: column;
  gap: 4px;
  margin: 4px 0 0 3px;
`;

const ColorizeLabel = styled(CheckLabel)`
  padding-left: 9px;
`;

const OpacitySlider = styled.input`
  width: 138px;
  height: 18px;
  margin: 0 5px 0 1px;
  appearance: none;
  border: 1px solid #999;
  border-right: 0;
  background: linear-gradient(90deg, #fff, #000 131px, #f0f0f0 131px);

  &::-webkit-slider-thumb {
    appearance: none;
    width: 5px;
    height: 20px;
    border-right: 2px solid #333;
    background: #fff;
  }
`;

const Spinner = styled.span`
  display: flex;
  width: 45px;
  height: 20px;
  border: 1px solid #7a7a7a;
  background: #fff;

  input {
    width: 29px;
    padding-left: 5px;
    border: 0;
    font-size: 10px;
  }
`;

const SpinButtons = styled.span`
  display: flex;
  flex-direction: column;

  button {
    display: grid;
    place-items: center;
    flex: 1;
    width: 14px;
    border: 1px solid #aaa;
    background: #f0f0f0;
  }
`;

const Sections = styled.div`
  padding-top: 3px;
  border-top: 1px solid #aaa;
`;

const Section = styled.h3`
  display: flex;
  align-items: center;
  gap: 5px;
  height: 16px;
  margin: 0 0 2px;
  padding: 0 2px 0 7px;
  border: 1px solid #999;
  border-top-color: #aaa;
  background: linear-gradient(#e0e0e0, #bdbdbd);
  font-size: 11px;
  font-weight: 400;
`;

const SectionClose = styled.button`
  width: 12px;
  height: 12px;
  border: 1px solid #888;
  background: #e6e6e6;
  font-size: 10px;
  line-height: 8px;
`;

const LayerTools = styled(Row)`
  padding: 0 5px 2px 6px;
`;

const IconButton = styled.button`
  display: flex;
  border: 0;
  background: none;
`;

const LayerTable = styled.table`
  width: 100%;
  border-collapse: collapse;
  background: #fff;
  font-size: 10px;

  th,
  td {
    padding: 0 4px;
    font-weight: 400;
    text-align: left;
  }

  th {
    height: 22px;
  }

  td {
    height: 18px;
  }

  th + th {
    border-left: 1px solid #ddd;
  }
`;

const LayerName = styled.label`
  display: flex;
  align-items: center;
  gap: 3px;
`;

const Radio = styled.input`
  width: 11px;
  height: 11px;
  appearance: none;
  border: 2px solid #222;
  border-radius: 50%;
  background: radial-gradient(#222 2px, #fff 3px);
`;

const LayerCheck = styled(Check)`
  margin-left: 15px;
`;

const LayerColor = styled.span`
  display: block;
  width: 17px;
  height: 12px;
  margin-left: 7px;
  background: #fd5658;
`;

const Watermark = styled.div`
  position: absolute;
  right: 61px;
  bottom: 68px;
  color: rgba(130, 130, 130, 0.62);
  font-size: 13px;
  line-height: 20px;
  white-space: nowrap;

  strong {
    display: block;
    font-size: 18px;
    font-weight: 400;
    line-height: 22px;
  }
`;

/* ---------- taskbar ---------- */

const Taskbar = styled.footer`
  display: flex;
  flex: none;
  height: 38px;
  background: linear-gradient(90deg, #2c2c2c, #0c0c0c 140px);
  color: #fff;
`;

const TaskButton = styled.button`
  display: grid;
  place-items: center;
  width: 45px;
  margin-right: 1px;
  padding-right: 1px;
  border: 0;
  background: ${(p) => (p.$active ? '#3b3b3b' : 'none')};
  ${(p) =>
    p.$open &&
    css`
      background: linear-gradient(#76b9ed, #76b9ed) bottom / ${p.$active ? 45 : 37}px 2px no-repeat
        ${p.$active ? '#3b3b3b' : 'transparent'};
    `}
`;

const SystemTray = styled.div`
  display: flex;
  align-items: center;
  margin-left: auto;
  font-size: 11px;
`;

const TrayButton = styled.button`
  display: grid;
  place-items: center;
  width: 23px;
  height: 38px;
  border: 0;
  background: none;
`;

const PeopleButton = styled(TrayButton)`
  width: 44px;
`;

const Lang = styled.span`
  margin-left: 4px;
`;

const Clock = styled.time`
  width: 64px;
  margin-left: 6px;
  line-height: 17px;
  text-align: center;
`;

const NoteButton = styled(TrayButton)`
  position: relative;
  width: 41px;
  margin-right: 10px;
`;

const Badge = styled.span`
  position: absolute;
  top: 17px;
  right: 4px;
  width: 18px;
  border: 1px solid #aaa;
  border-radius: 9px;
  background: #333;
  font-size: 10px;
  line-height: 14px;
`;

/* ---------- model view ---------- */

// the floor gets wider towards the viewer, so tiles are laid flat and then projected
const FALLOFF = 0.0018;
const project = (u, v) => {
  const s = 1 / (1 - FALLOFF * v);
  return `${(516 + u * s).toFixed(1)},${(325 + v * s).toFixed(1)}`;
};

const tiles = [];
for (let i = -8; i < 22; i += 1) {
  for (let j = -1; j < 12; j += 1) {
    const u = i * 12;
    const v = j * 10 + (i % 2 ? 5 : 0);
    tiles.push(
      [[-8, 0], [-4, -5], [4, -5], [8, 0], [4, 5], [-4, 5]]
        .map(([x, y]) => project(u + x, v + y))
        .join(' ')
    );
  }
}

const Model = () => (
  <Scene viewBox="78 149 934 471" preserveAspectRatio="xMinYMin slice" role="img" aria-label="Model">
    <defs>
      <pattern id="dots" width="4" height="7" patternUnits="userSpaceOnUse">
        <rect width="4" height="7" fill="#fff" />
        <path d="M0 1h1v1H0zM2 4h1v1H2z" fill="#33334a" />
      </pattern>
      <clipPath id="floor">
        <path d="M453 325h255l18 53H595l-7 71H439z" />
      </clipPath>
    </defs>
    <path d="M770 332h250v13H770z" fill="#e4e0df" />
    <path d="M770 331l250 2" stroke="#000" strokeWidth="2" />
    <path d="M226 488h557l30-91-26-53 233 1v280H170z" fill="#929fa6" stroke="#222" />
    <path d="M184 593h30l-11 30h-32z" fill="#e4e0e0" stroke="#222" />
    <path d="M253 488l-48 131" stroke="#222" />
    <path d="M225 488l-54 133" stroke="#000" strokeWidth="2" />
    <path d="M272 247l467 1 74 149-618-2z" fill="#e4e0e0" />
    <path d="M195 395l77-148 467 1 74 149" fill="none" stroke="#000" strokeWidth="2" />
    <path d="M195 395h30l28 93h-28z" fill="#fff" />
    <path d="M225 395h208l4 73h152l7-72 217 1-30 93-530-2z" fill="url(#dots)" stroke="#334" />
    <path d="M195 394h237" stroke="#222" />
    <path d="M285 270l17 85-7 20h-61z" fill="#676566" stroke="#111" />
    <path d="M285 270h163l2 86-148-1z" fill="#fff" stroke="#222" />
    <path d="M302 355l148 1 5 60-16 33-7-72-137-2z" fill="#0c0606" />
    <path d="M449 259h272l-13 66H453z" fill="#fff" stroke="#111" />
    <path d="M721 259l52 118h-47l-18-52z" fill="#676566" stroke="#111" />
    <path d="M453 325h255l18 53H595l-7 71H439z" fill="#342d2c" />
    <g clipPath="url(#floor)" fill="#342d2c" stroke="#100b0b" strokeWidth="1">
      {tiles.map((points) => (
        <polygon key={points} points={points} />
      ))}
    </g>
    <path d="M439 449h149l1 19H437z" fill="#e4e0e0" stroke="#222" />
    <path d="M449 259l-2 11 3 86 3-31z" fill="#666" stroke="#111" />
    <path d="M432 377l1 18 4 73 2-19z" fill="#777" stroke="#111" />
    <path d="M595 378l1 18-7 72-1-19z" fill="#777" stroke="#111" />
    <path d="M234 376l198 1M595 377h178" stroke="#000" strokeWidth="2" />
    <path d="M195 395l30 93M813 397l-30 93" stroke="#000" strokeWidth="2" />
    <g stroke="#666" strokeWidth="1">
      <path d="M284 222h210M519 222h210M285 221l-13 25M727 222l12 25M211 246h59M114 394h78M211 246l-34 52M162 322l-48 72" />
      <path d="M279 224l12-4M722 224l11-4M207 244l9 5M110 391l8 6M118 391l-7 6" stroke="#333" strokeWidth="2" />
    </g>
    <g fill="#555" fontFamily="'Noto Sans', sans-serif" fontSize="14" textAnchor="middle">
      <text x="505" y="228">3m</text>
      <text x="169" y="316">1m</text>
    </g>
  </Scene>
);

const Tools = ({ names, active, grow }) =>
  names.map((name) => (
    <ToolButton key={name} $active={name === active} $grow={grow} aria-label={name}>
      <Icon name={name} size={grow ? 24 : 26} />
    </ToolButton>
  ));

const menus = [
  ['', 'F', 'ile'],
  ['', 'E', 'dit'],
  ['', 'V', 'iew'],
  ['', 'C', 'amera'],
  ['D', 'r', 'aw'],
  ['', 'T', 'ools'],
  ['', 'W', 'indow'],
  ['E', 'x', 'tensions'],
  ['', 'H', 'elp'],
];

const edit = ['move', 'push', 'rotate', 'follow', 'scale', 'offset'];

const plugins = [
  'slabHash', 'slabBlue', 'slabGold', 'slabGreen', 'slabRed', 'slabWhite', 'ring', 'redCorner', 'bars', 'flag',
  'woodJoint', 'pipe', 'bend', 'beadsRed', 'beadsBlue', 'crossRed', 'crossGreen', 'crossBlue', 'drop', 'dropHash',
  'mirror', 'loop', 'loopCut', 'loopDots', 'moveBlue', 'woodCube', 'magnet', 'greenCubes', 'wireBend', 'wireSwirl',
  'wireSwirlTwo', 'swatch', 'fourCubes', 'glassCube', 'gridDiag', 'gridFour', 'gridNine', 'redMarks',
];

const palette = [
  ['cursor', 'component', 'bucket', 'eraser'],
  ['pencil', 'freehand', 'rectangle', 'rotRect', 'circle', 'polygon', 'arc', 'twoArc', 'threeArc', 'pie'],
  edit,
  ['tape', 'dimension', 'protractor', 'textTag', 'axes', 'threeText'],
  ['orbit', 'pan', 'zoom', 'zoomAll'],
];

const tasks = [
  ['windows', 18], ['search', 16], ['taskView', 16], ['explorer', 20, true], ['calculator', 22], ['powerpoint', 24],
  ['chrome', 24, true], ['chromium', 22], ['illustrator', 22], ['photoshop', 22], ['app', 22, true, true],
  ['paint', 24, true],
];

const monthTrack = 'linear-gradient(90deg, #fffbe8, #e8b026 33%, #e4100c 66%, #f59a9a 86%, #fbd5d8)';
const timeTrack = 'linear-gradient(90deg, #f8fbfd, #9fbfe0 35%, #6a7ff0 68%, #4450b0 78%, #000)';

const ShadowBar = () => (
  <ShadowRow>
    <ShadowGroup>
      <Grip />
      <ToolButton aria-label="Shadows">
        <Icon name="shadow" size={23} />
      </ToolButton>
      <ShadowScales>
        <Scale>
          <ScaleInput type="range" min="0" max="100" defaultValue="86" $track={monthTrack} aria-label="Month" />
          <ScaleMarks $inset={4}>
            {'JFMAMJJASOND'.split('').map((m, i) => (
              <span key={`${m}${i}`}>{m}</span>
            ))}
          </ScaleMarks>
        </Scale>
        <Scale>
          <ScaleInput type="range" min="0" max="100" defaultValue="70" $track={timeTrack} aria-label="Time" />
          <ScaleMarks $inset={0}>
            <span>06:43 AM</span>
            <span>Noon</span>
            <span>04:45 PM</span>
          </ScaleMarks>
        </Scale>
      </ShadowScales>
    </ShadowGroup>
  </ShadowRow>
);

const DefaultTray = () => (
  <Tray>
    <TrayTitle>
      Default Tray
      <Spacer />
      <Icon name="pin" size={9} />
      <CloseButton aria-label="Close tray">x</CloseButton>
    </TrayTitle>
    <TrayScroll>
      <TrayBody>
        <PreviewRow>
          <Preview />
          <Corner />
        </PreviewRow>
        <TabRow>
          <Tab>Select</Tab>
          <Tab $active>Edit</Tab>
          <Spacer />
          <TabIcon aria-label="Sample">
            <Icon name="dropper" size={18} />
          </TabIcon>
        </TabRow>
        <Pane>
          <Heading>Color</Heading>
          <PickerRow $height={30} $gap={2}>
            <label htmlFor="picker">Picker:</label>
            <Spacer />
            <SelectWrap>
              <Select id="picker" defaultValue="wheel">
                <option value="wheel">Color Wheel</option>
              </Select>
              <svg width="8" height="5" viewBox="0 0 8 5">
                <path d="M0 0l4 4 4-4" fill="none" stroke="#444" />
              </svg>
            </SelectWrap>
            <Swatch $color="#e8e4e2" />
            <Spacer />
            <Icon name="woodBox" size={16} />
            <Spacer />
            <Icon name="monitor" size={16} />
          </PickerRow>
          <WheelRow>
            <Wheel>
              <WheelMark />
            </Wheel>
            <ValueSlider type="range" min="0" max="100" defaultValue="0" aria-label="Value" />
          </WheelRow>
          <Heading>Texture</Heading>
          <Row $height={23}>
            <CheckLabel>
              <Check type="checkbox" defaultChecked />
              Use texture image
            </CheckLabel>
          </Row>
          <Row $height={22} $gap={2}>
            <TextBox $width={146} defaultValue="White Square Tile.jpg" aria-label="Texture file" />
            <Icon name="folder" size={17} />
            <Spacer />
            <Icon name="woodBox" size={16} />
          </Row>
          <SizeGrid>
            <SizeStack>
              <SizeField>
                <Icon name="arrowsH" size={13} />
                <TextBox $width={51} $height={22} defaultValue="~ 0m" />
              </SizeField>
              <SizeField>
                <Icon name="arrowsV" size={13} />
                <TextBox $width={51} $height={22} defaultValue="~ 0m" />
              </SizeField>
            </SizeStack>
            <Brace viewBox="0 0 12 32">
              <path d="M2 2c4 0 4 3 4 6s0 7 4 8c-4 1-4 5-4 8s0 6-4 6" fill="none" stroke="#222" strokeWidth="2" />
            </Brace>
            <Icon name="chain" size={18} />
            <ColorStack>
              <ColorizeLabel>
                <Check type="checkbox" />
                Colorize
              </ColorizeLabel>
              <CheckLabel as="div">
                <Swatch $color="#ebe9e4" />
                Reset Color
              </CheckLabel>
            </ColorStack>
          </SizeGrid>
          <Heading>Opacity</Heading>
          <Row $height={34}>
            <OpacitySlider type="range" min="0" max="100" defaultValue="100" aria-label="Opacity" />
            <Spinner>
              <input defaultValue="100" aria-label="Opacity value" />
              <SpinButtons>
                <button aria-label="Up">
                  <svg width="6" height="3" viewBox="0 0 6 3"><path d="M0 3l3-3 3 3z" /></svg>
                </button>
                <button aria-label="Down">
                  <svg width="6" height="3" viewBox="0 0 6 3"><path d="M0 0l3 3 3-3z" /></svg>
                </button>
              </SpinButtons>
            </Spinner>
          </Row>
        </Pane>
        <Sections>
          {['Components', 'Styles', 'Layers'].map((name) => (
            <Section key={name}>
              <svg width="7" height="7" viewBox="0 0 7 7">
                <path d={name === 'Layers' ? 'M0 1h7L4 7z' : 'M1 0l6 3-6 4z'} />
              </svg>
              {name}
              <Spacer />
              <SectionClose aria-label={`Close ${name}`}>×</SectionClose>
            </Section>
          ))}
        </Sections>
        <LayerTools $height={24} $gap={8}>
          <IconButton aria-label="Add layer"><Icon name="plus" size={14} /></IconButton>
          <IconButton aria-label="Remove layer"><Icon name="minus" size={14} /></IconButton>
          <Spacer />
          <IconButton aria-label="Details"><Icon name="details" size={14} /></IconButton>
        </LayerTools>
        <LayerTable>
          <colgroup>
            <col />
            <col width="47" />
            <col width="38" />
          </colgroup>
          <thead>
            <tr>
              <th>Name</th>
              <th>Visible</th>
              <th>Color</th>
            </tr>
          </thead>
          <tbody>
            <tr>
              <td>
                <LayerName>
                  <Radio type="radio" name="layer" defaultChecked />
                  Layer0
                </LayerName>
              </td>
              <td><LayerCheck type="checkbox" defaultChecked aria-label="Layer0 visible" /></td>
              <td><LayerColor /></td>
            </tr>
          </tbody>
        </LayerTable>
      </TrayBody>
      <ScrollTrack>
        <svg width="8" height="6" viewBox="0 0 8 6">
          <path d="M1 5l3-4 3 4" fill="none" stroke="#444" strokeWidth="2" />
        </svg>
        <ScrollThumb />
        <svg width="8" height="6" viewBox="0 0 8 6">
          <path d="M1 1l3 4 3-4" fill="none" stroke="#444" strokeWidth="2" />
        </svg>
      </ScrollTrack>
    </TrayScroll>
  </Tray>
);

const App = () => (
  <>
    <GlobalStyle />
    <Window>
      <TitleBar>
        <Icon name="app" size={13} />
        <Title>Untitled - SketchUp Pro 2018</Title>
        <WindowButton aria-label="Minimize">
          <svg width="10" height="10" viewBox="0 0 10 10"><path d="M0 5h10" stroke="#111" /></svg>
        </WindowButton>
        <WindowButton aria-label="Restore">
          <svg width="10" height="10" viewBox="0 0 10 10">
            <path d="M1 3h6v6H1zM3 3V1h6v6H7" fill="none" stroke="#111" />
          </svg>
        </WindowButton>
        <WindowButton aria-label="Close">
          <svg width="10" height="10" viewBox="0 0 10 10"><path d="M0 0l10 10M10 0L0 10" stroke="#111" /></svg>
        </WindowButton>
      </TitleBar>
      <MenuBar>
        {menus.map(([before, key, after]) => (
          <MenuLink href="#menu" key={key + after}>
            {before}
            <Hot>{key}</Hot>
            {after}
          </MenuLink>
        ))}
      </MenuBar>

      <ToolRow>
        <ToolGroup>
          <Grip />
          <Tools names={edit} active="push" />
        </ToolGroup>
        <ToolGroup>
          <Grip />
          <Tools names={['rectLight', 'sphereLight', 'spotLight', 'iesLight', 'omniLight', 'domeLight', 'meshLight']} />
        </ToolGroup>
        <ToolGroup>
          <Grip />
          <Tools names={['infinite', 'exportProxy', 'importProxy', 'fur', 'clipper']} />
        </ToolGroup>
        <ToolGroup>
          <Grip />
          <Tools names={['vray']} />
          <Rule />
          <Tools names={['teapot', 'teapotHand']} />
          <Rule />
          <Tools names={['cloudPot', 'framePot']} />
          <Rule />
          <Tools names={['buffer', 'framesPot', 'framesCloud', 'lock']} />
        </ToolGroup>
        <ToolGroup>
          <Grip />
          <Tools names={['squares', 'squaresDash']} />
          <Rule />
          <Tools names={['diagonal', 'cubeChecks', 'cubeChecksBig', 'ballChecks', 'ballChecksBig']} />
          <Rule />
          <Tools names={['cubeHand']} />
        </ToolGroup>
      </ToolRow>

      <ShadowBar />

      <ToolRow>
        <ToolGroup $grow>
          <Grip />
          <Tools names={plugins} grow />
          <LastTool aria-label="pointsArc">
            <Icon name="pointsArc" size={24} />
          </LastTool>
        </ToolGroup>
        <ToolGroup>
          <Grip />
          <LastTool aria-label="cursor">
            <Icon name="cursor" size={20} />
          </LastTool>
          <Spacer />
        </ToolGroup>
      </ToolRow>

      <Workspace>
        <LeftEdge>
          <EdgeView />
          <EdgeBar>
            <Grip as="div" />
          </EdgeBar>
        </LeftEdge>
        <Palette>
          <PaletteTitle>
            Large T...
            <CloseButton aria-label="Close tools">x</CloseButton>
          </PaletteTitle>
          {palette.map((names) => (
            <PaletteGrid key={names[0]}>
              <Tools names={names} active="push" />
            </PaletteGrid>
          ))}
        </Palette>
        <Center>
          <Stage>
            <Viewport>
              <Model />
            </Viewport>
            <DefaultTray />
          </Stage>
          <MeasureRow>
            <MeasureBox>
              <MeasureInput defaultValue="~ -1m" aria-label="Measurements" />
            </MeasureBox>
          </MeasureRow>
          <Status>{'| Pick face to push or pull.  Ctrl = toggle create new starting face.'}</Status>
        </Center>
      </Workspace>

      <Taskbar>
        {tasks.map(([name, size, open, active]) => (
          <TaskButton key={name} $open={open} $active={active} aria-label={name}>
            <Icon name={name} size={size} />
          </TaskButton>
        ))}
        <SystemTray>
          <PeopleButton aria-label="people"><Icon name="people" size={15} /></PeopleButton>
          {['chevronUp', 'wacom', 'network', 'speaker', 'dropbox'].map((name) => (
            <TrayButton key={name} aria-label={name}>
              <Icon name={name} size={name === 'chevronUp' ? 12 : 16} />
            </TrayButton>
          ))}
          <Lang>ENG</Lang>
          <Clock>
            1:02 AM
            <br />
            03/07/2020
          </Clock>
          <NoteButton aria-label="Notifications">
            <Icon name="note" size={16} />
            <Badge>32</Badge>
          </NoteButton>
        </SystemTray>
      </Taskbar>

      <Watermark>
        <strong>Activate Windows</strong>
        Go to Settings to activate Windows.
      </Watermark>
    </Window>
  </>
);

export default App;
